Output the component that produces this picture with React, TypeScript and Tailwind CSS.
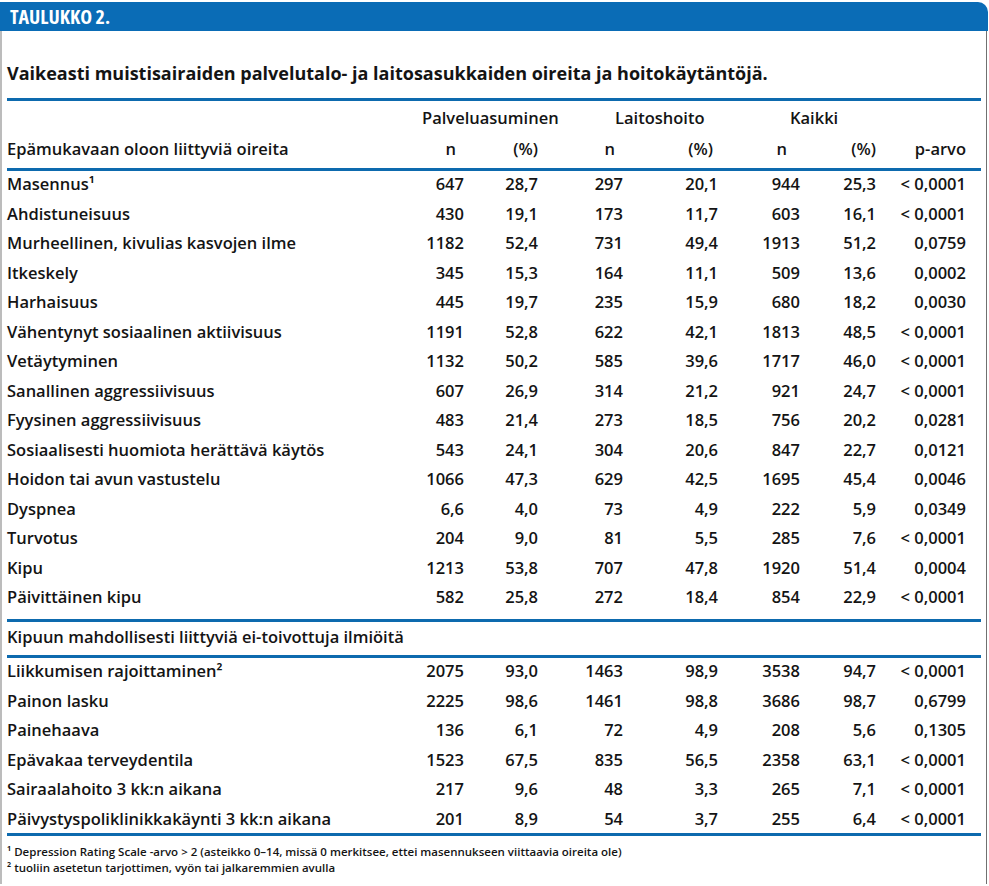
import React from 'react';

type Row = [string, string, string, string, string, string, string, string];

const oireet: Row[] = [
  ['Masennus¹', '647', '28,7', '297', '20,1', '944', '25,3', '< 0,0001'],
  ['Ahdistuneisuus', '430', '19,1', '173', '11,7', '603', '16,1', '< 0,0001'],
  ['Murheellinen, kivulias kasvojen ilme', '1182', '52,4', '731', '49,4', '1913', '51,2', '0,0759'],
  ['Itkeskely', '345', '15,3', '164', '11,1', '509', '13,6', '0,0002'],
  ['Harhaisuus', '445', '19,7', '235', '15,9', '680', '18,2', '0,0030'],
  ['Vähentynyt sosiaalinen aktiivisuus', '1191', '52,8', '622', '42,1', '1813', '48,5', '< 0,0001'],
  ['Vetäytyminen', '1132', '50,2', '585', '39,6', '1717', '46,0', '< 0,0001'],
  ['Sanallinen aggressiivisuus', '607', '26,9', '314', '21,2', '921', '24,7', '< 0,0001'],
  ['Fyysinen aggressiivisuus', '483', '21,4', '273', '18,5', '756', '20,2', '0,0281'],
  ['Sosiaalisesti huomiota herättävä käytös', '543', '24,1', '304', '20,6', '847', '22,7', '0,0121'],
  ['Hoidon tai avun vastustelu', '1066', '47,3', '629', '42,5', '1695', '45,4', '0,0046'],
  ['Dyspnea', '6,6', '4,0', '73', '4,9', '222', '5,9', '0,0349'],
  ['Turvotus', '204', '9,0', '81', '5,5', '285', '7,6', '< 0,0001'],
  ['Kipu', '1213', '53,8', '707', '47,8', '1920', '51,4', '0,0004'],
  ['Päivittäinen kipu', '582', '25,8', '272', '18,4', '854', '22,9', '< 0,0001'],
];

const ilmiot: Row[] = [
  ['Liikkumisen rajoittaminen²', '2075', '93,0', '1463', '98,9', '3538', '94,7', '< 0,0001'],
  ['Painon lasku', '2225', '98,6', '1461', '98,8', '3686', '98,7', '0,6799'],
  ['Painehaava', '136', '6,1', '72', '4,9', '208', '5,6', '0,1305'],
  ['Epävakaa terveydentila', '1523', '67,5', '835', '56,5', '2358', '63,1', '< 0,0001'],
  ['Sairaalahoito 3 kk:n aikana', '217', '9,6', '48', '3,3', '265', '7,1', '< 0,0001'],
  ['Päivystyspoliklinikkakäynti 3 kk:n aikana', '201', '8,9', '54', '3,7', '255', '6,4', '< 0,0001'],
];

const cols = 'grid grid-cols-[1fr_60px_74px_85px_95px_82px_76px_90px] pr-[15px]';

const Rule = () => <div className="h-[3px] bg-[#0d6aae]" />;

const DataRow = ({ row }: { row: Row }) => (
  <div className={`${cols} h-[29.5px] items-center pb-[3px]`}>
    <div className="whitespace-nowrap">{row[0]}</div>
    {row.slice(1).map((v, i) => (
      <div key={i} className="text-right whitespace-nowrap">{v}</div>
    ))}
  </div>
);

export default function App() {
  return (
    <div className="w-[988px] font-['Open_Sans',sans-serif] text-[#141414]">
      <div className="mt-[2px] h-[29px] bg-[#0a6cb6] rounded-tr-[10px] pl-[10px] flex items-center text-white font-bold text-[20px] font-stretch-condensed">
        TAULUKKO 2.
      </div>
      <div className="w-[987px] border-l-2 border-l-[#bcbcbc] border-r border-r-[#707070] px-[5px] pb-[8px]">
        <h1 className="pt-[29px] pb-[12px] text-[18px] leading-[26px] font-bold whitespace-nowrap">
          Vaikeasti muistisairaiden palvelutalo- ja laitosasukkaiden oireita ja hoitokäytäntöjä.
        </h1>
        <Rule />
        <div className="text-[16.5px] font-[550] leading-[20px]">
          <div className={`${cols} h-[33px] items-center`}>
            <div />
            <div className="col-span-2 pl-[18px] whitespace-nowrap">Palveluasuminen</div>
            <div className="col-span-2 pl-[77px] whitespace-nowrap">Laitoshoito</div>
            <div className="col-span-2 pl-[72px] whitespace-nowrap">Kaikki</div>
            <div />
          </div>
          <div className={`${cols} h-[34px] items-center pb-[4px]`}>
            <div className="whitespace-nowrap">Epämukavaan oloon liittyviä oireita</div>
            <div className="text-right pr-[8px]">n</div>
            <div className="text-right">(%)</div>
            <div className="text-right pr-[8px]">n</div>
            <div className="text-right pr-[5px]">(%)</div>
            <div className="text-right pr-[13px]">n</div>
            <div className="text-right">(%)</div>
            <div className="text-right">p-arvo</div>
          </div>
          <Rule />
          <div className="pb-[5.5px]">
            {oireet.map((r) => (
              <DataRow key={r[0]} row={r} />
            ))}
          </div>
          <Rule />
          <div className="h-[33px] flex items-center pb-[3px] whitespace-nowrap">
            Kipuun mahdollisesti liittyviä ei-toivottuja ilmiöitä
          </div>
          <Rule />
          <div className="-mb-[2px]">
            {ilmiot.map((r) => (
              <DataRow key={r[0]} row={r} />
            ))}
          </div>
          <Rule />
        </div>
        <div className="pt-[8px] text-[11.5px] leading-[16px] font-semibold">
          <p className="whitespace-nowrap">¹ Depression Rating Scale -arvo &gt; 2 (asteikko 0–14, missä 0 merkitsee, ettei masennukseen viittaavia oireita ole)</p>
          <p className="whitespace-nowrap">² tuoliin asetetun tarjottimen, vyön tai jalkaremmien avulla</p>
        </div>
      </div>
    </div>
  );
}
